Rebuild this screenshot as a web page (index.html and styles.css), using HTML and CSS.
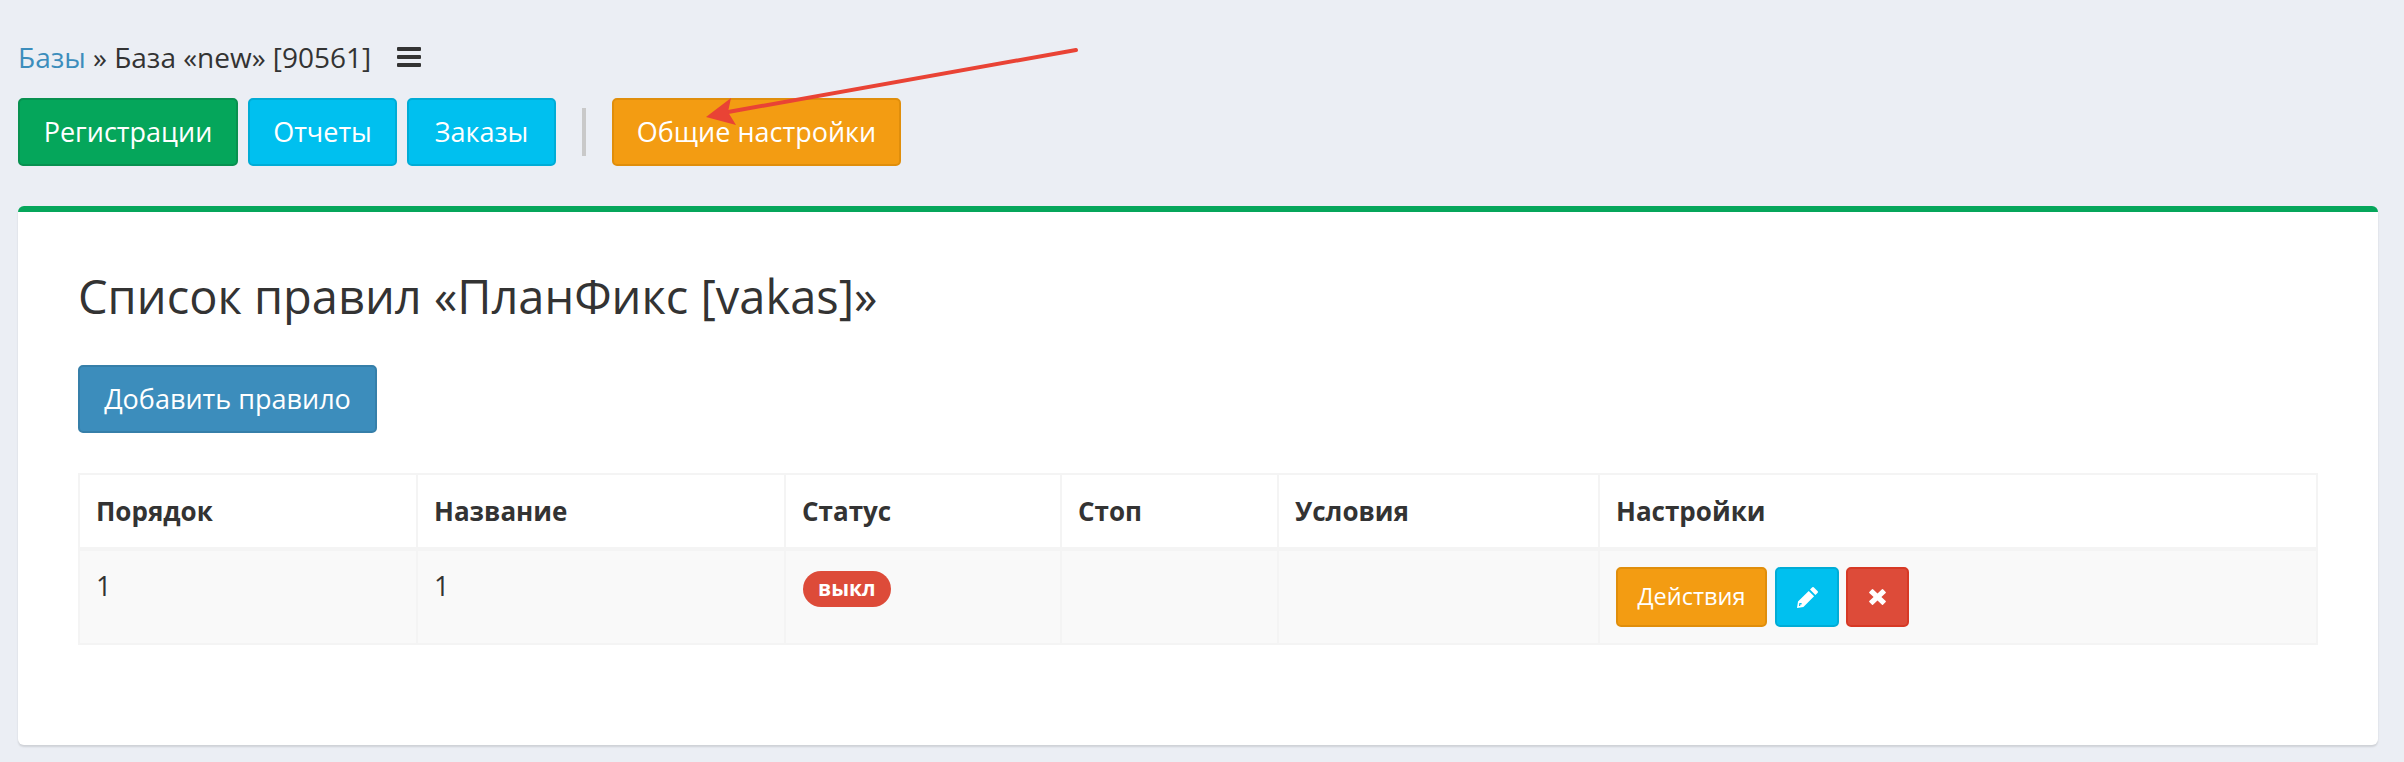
FILE: index.html
```html
<!DOCTYPE html>
<html lang="ru">
  <head>
    <meta charset="UTF-8" />
    <title>Список правил</title>
    <link rel="stylesheet" href="styles.css">
  </head>
  <body>
    <div class="crumbs">
      <span><a href="#">Базы</a> » База «new» [90561]</span>
      <svg class="burger" viewBox="0 0 24 20"><path d="M1 0h22a1 1 0 0 1 1 1v2a1 1 0 0 1-1 1H1a1 1 0 0 1-1-1V1a1 1 0 0 1 1-1zM1 8h22a1 1 0 0 1 1 1v2a1 1 0 0 1-1 1H1a1 1 0 0 1-1-1V9a1 1 0 0 1 1-1zM1 16h22a1 1 0 0 1 1 1v2a1 1 0 0 1-1 1H1a1 1 0 0 1-1-1v-2a1 1 0 0 1 1-1z" /></svg>
    </div>
    <div class="topbar">
      <a class="btn green" href="#">Регистрации</a>
      <a class="btn cyan" href="#">Отчеты</a>
      <a class="btn cyan" href="#">Заказы</a>
      <span class="sep"></span>
      <a class="btn orange" href="#">Общие настройки</a>
    </div>
    <div class="box">
      <h2>Список правил «ПланФикс [vakas]»</h2>
      <a class="btn blue" href="#">Добавить правило</a>
      <table>
        <colgroup>
          <col class="c1"><col class="c2"><col class="c3"><col class="c4"><col class="c5"><col>
        </colgroup>
        <thead>
          <tr>
            <th>Порядок</th>
            <th>Название</th>
            <th>Статус</th>
            <th>Стоп</th>
            <th>Условия</th>
            <th>Настройки</th>
          </tr>
        </thead>
        <tbody>
          <tr>
            <td>1</td>
            <td>1</td>
            <td><span class="badge">выкл</span></td>
            <td></td>
            <td></td>
            <td>
              <div class="actions">
                <a class="btn small orange" href="#">Действия</a>
                <a class="btn small icon cyan" href="#">
                  <svg class="pencil" viewBox="0 0 21 21"><path d="M15.300 0.300q0.700-0.500 1.400 0l4 4q0.500 0.700 0 1.400l-2.300 2.300-5.400-5.400zM11.700 3.900l5.400 5.400L6.400 20 0 21l1-6.400zM2.400 16l-0.500 3.100 1.400-0.200-0.100-1.300 1.300 0 0.200-1.500-1.500-0.100z" fill-rule="evenodd" /></svg>
                </a>
                <a class="btn small icon red" href="#">
                  <svg class="cross" viewBox="0 0 17 16"><path d="M4 0.300l4.500 4.300L13 0.300q0.500-0.400 1 0l2.700 2.700q0.400 0.500 0 1L12.400 8l4.300 4q0.400 0.500 0 1L14 15.700q-0.500 0.400-1 0L8.500 11.400 4 15.700q-0.500 0.400-1 0L0.300 13q-0.400-0.500 0-1L4.600 8 0.300 4q-0.400-0.500 0-1L3 0.300q0.500-0.400 1 0z" /></svg>
                </a>
              </div>
            </td>
          </tr>
        </tbody>
      </table>
    </div>
    <!-- стрелка поверх скриншота -->
    <svg class="arrow" viewBox="0 0 2404 762">
      <line x1="1076" y1="50" x2="728" y2="112" />
      <polygon points="706,117 731,98 728,112 736,125" />
    </svg>
  </body>
</html>
```

FILE: styles.css
```css
* {
  box-sizing: border-box;
}
body {
  margin: 0;
  padding: 41px 26px 17px 18px;
  background: #ebeef4;
  color: #333;
  font-family: "Open Sans", "Noto Sans", sans-serif;
  font-size: 27px;
}
a {
  color: #3c8dbc;
  text-decoration: none;
}
.crumbs {
  display: flex;
  height: 33px;
  font-size: 28px;
  line-height: 33px;
}
.burger {
  width: 24px;
  height: 20px;
  margin: 6px 0 0 26px;
  fill: #333;
}
.topbar {
  display: flex;
  align-items: center;
  margin-top: 24px;
}
.btn {
  display: inline-flex;
  align-items: center;
  justify-content: center;
  height: 68px;
  padding-bottom: 2px;
  border: 2px solid;
  border-radius: 5px;
  color: #fff;
  white-space: nowrap;
}
.topbar .cyan {
  width: 149px;
  margin-left: 10px;
}
.green {
  width: 220px;
  background: #05a65b;
  border-color: #089150;
}
.cyan {
  background: #00c0ef;
  border-color: #00acd6;
}
.orange {
  background: #f39c12;
  border-color: #e08e0b;
}
.blue {
  display: flex;
  width: 299px;
  background: #3c8dbc;
  border-color: #367fa9;
}
.red {
  background: #dd4b39;
  border-color: #d73925;
}
.sep {
  width: 4px;
  height: 48px;
  margin: 0 26px;
  background: #c9c9c9;
}
.topbar .orange {
  width: 289px;
}
.box {
  height: 539px;
  margin-top: 40px;
  padding: 53px 0 0 60px;
  background: #fff;
  border-top: 6px solid #05a65b;
  border-radius: 6px;
  box-shadow: 0 2px 2px rgba(0, 0, 0, 0.12);
}
h2 {
  height: 62px;
  margin: 0 0 38px;
  font-size: 47px;
  font-weight: 500;
  line-height: 62px;
}
table {
  width: 2240px;
  margin-top: 40px;
  table-layout: fixed;
  border-collapse: collapse;
  border: 2px solid #f4f4f4;
}
.c1 {
  width: 338px;
}
.c2 {
  width: 368px;
}
.c3 {
  width: 276px;
}
.c4 {
  width: 217px;
}
.c5 {
  width: 321px;
}
th,
td {
  border: 2px solid #f4f4f4;
  padding: 0 0 0 16px;
  text-align: left;
}
th {
  height: 75px;
  border-bottom-width: 4px;
  font-size: 26px;
  font-weight: 700;
}
td {
  height: 95px;
  padding-top: 16px;
  background: #f9f9f9;
  vertical-align: top;
}
.badge {
  display: inline-block;
  height: 36px;
  margin: 4px 0 0 1px;
  padding: 0 15px;
  border-radius: 18px;
  background: #dd4b39;
  color: #fff;
  font-size: 21px;
  font-weight: 700;
  line-height: 34px;
}
.actions {
  display: flex;
  gap: 8px;
}
.btn.small {
  width: 151px;
  height: 60px;
  font-size: 23.5px;
}
.btn.icon {
  width: 64px;
  padding-bottom: 0;
}
.btn.red {
  width: 63px;
  margin-left: -1px;
}
.pencil {
  width: 21px;
  height: 21px;
  fill: #fff;
}
.cross {
  width: 17px;
  height: 16px;
  fill: #fff;
}
.arrow {
  position: absolute;
  left: 0;
  top: 0;
  width: 2404px;
  height: 762px;
  pointer-events: none;
}
.arrow line {
  stroke: #e94335;
  stroke-width: 4;
  stroke-linecap: round;
}
.arrow polygon {
  fill: #e94335;
}
```
